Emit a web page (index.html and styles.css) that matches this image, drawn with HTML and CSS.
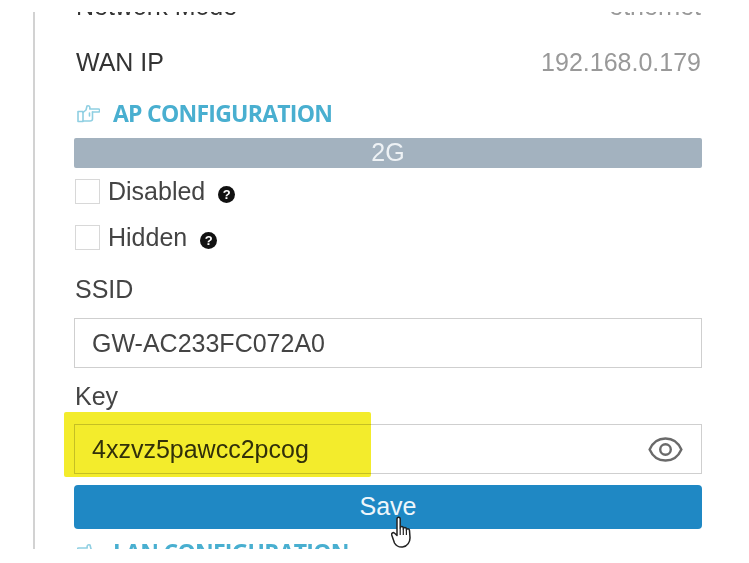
FILE: index.html
```html
<!DOCTYPE html>
<html lang="en">
  <head>
    <meta charset="UTF-8" />
    <meta name="viewport" content="width=device-width, initial-scale=1.0" />
    <title>AP Configuration</title>
    <link rel="stylesheet" href="styles.css">
  </head>
  <body>
    <div class="panel">
      <div class="content">
        <div class="row"><span>Network Mode</span><span class="value">ethernet</span></div>
        <div class="row"><span>WAN IP</span><span class="value">192.168.0.179</span></div>

        <h3 class="section">
          <svg class="hand" viewBox="0 0 23 19" fill="none" stroke="currentColor" stroke-width="1.6" stroke-linejoin="round" stroke-linecap="round">
            <path d="M1 7.500h5v10H1z" />
            <path d="M6 8.500 9 6l1-4c2-.8 3.300.5 2.800 3H21.500c1.500 0 1.500 3 0 3H15.500" />
            <path d="M15.500 8v7c0 1.500-1 2-2.500 2H6" />
            <path d="M12.500 9v3" />
          </svg>
          AP CONFIGURATION
        </h3>

        <div class="band">2G</div>

        <label class="check first"><span class="box"></span>Disabled<span class="help">?</span></label>
        <label class="check"><span class="box"></span>Hidden<span class="help">?</span></label>

        <div class="label ssid-label">SSID</div>
        <div class="field">GW-AC233FC072A0</div>

        <div class="label key-label">Key</div>
        <div class="field key-field">
          4xzvz5pawcc2pcog
          <svg class="eye" viewBox="0 0 36 26" fill="none" stroke="#6a6a6a" stroke-width="2.500">
            <path d="M1.500 13C5 5 11 1.500 18 1.500S31 5 34.500 13C31 21 25 24.500 18 24.500S5 21 1.500 13z" />
            <circle cx="18" cy="13" r="5.500" />
          </svg>
          <span class="marker"></span>
        </div>

        <div class="save">
          Save
          <svg class="cursor" viewBox="0 0 24 32">
            <path d="M6 3c0-2.500 3.200-2.500 3.200 0v9c.2-2 3-2 3.100 0v1c.2-2 3-2 3.100 0v1c.2-1.800 3-1.600 3.100.5l.5 7c.2 4-2.500 9-7.500 9.500-4 .3-6.300-1-8-4L.9 19.500c-1-2 1-3.500 2.500-2.500L6 19.500z" fill="#fff" stroke="#222" stroke-width="1.500" stroke-linejoin="round" />
            <path d="M9.200 12v7M12.300 13v6M15.400 14v5" fill="none" stroke="#222" stroke-width="1.200" />
          </svg>
        </div>

        <h3 class="section lan">
          <svg class="hand flip" viewBox="0 0 23 19" fill="none" stroke="currentColor" stroke-width="1.600" stroke-linejoin="round" stroke-linecap="round">
            <path d="M1 7.500h5v10H1z" />
            <path d="M6 8.500 9 6l1-4c2-.8 3.300.5 2.800 3H21.500c1.500 0 1.500 3 0 3H15.500" />
          </svg>
          LAN CONFIGURATION
        </h3>
      </div>
    </div>
  </body>
</html>
```

FILE: styles.css
```css
body {
  margin: 0;
  padding: 12px 0 0 33px;
  background-color: #fff;
  font-family: "Liberation Sans", Arial, sans-serif;
  font-size: 25px;
  color: #444;
  overflow: hidden;
}

.panel {
  width: 669px;
  height: 537px;
  box-sizing: border-box;
  padding-left: 39px;
  border-left: 2px solid #d2d2d2;
  overflow: hidden;
}

/* scrolled view, first row is cut by the top of the panel */
.content {
  margin-top: -31px;
}

.row {
  display: flex;
  justify-content: space-between;
  height: 50px;
  line-height: 50px;
  padding: 0 1px 0 2px;
  color: #333;
}

.row:first-child {
  height: 56px;
}

.value {
  color: #999;
}

.section {
  display: flex;
  align-items: center;
  gap: 13px;
  height: 40px;
  margin: 6px 0 5px;
  padding-left: 3px;
  font-family: "Open Sans", sans-serif;
  font-size: 23px;
  font-weight: 700;
  color: #49afd0;
  letter-spacing: -0.75px;
}

.hand {
  width: 23px;
  height: 19px;
  color: #8fcfe2;
}

.band {
  height: 30px;
  line-height: 28px;
  text-align: center;
  color: #eef2f5;
  background-color: #a3b2bf;
  border-radius: 2px;
}

.check {
  display: flex;
  align-items: center;
  height: 25px;
  margin-top: 21px;
  padding-left: 1px;
}

.check.first {
  margin-top: 11px;
}

.box {
  width: 25px;
  height: 25px;
  box-sizing: border-box;
  margin-right: 8px;
  border: 1px solid #d8d8d8;
}

.help {
  display: inline-block;
  width: 17px;
  height: 17px;
  margin: 6px 0 0 13px;
  border-radius: 50%;
  background-color: #111;
  color: #fff;
  font-size: 13px;
  font-weight: bold;
  line-height: 17px;
  text-align: center;
}

.label {
  padding-left: 1px;
  line-height: 30px;
}

.ssid-label {
  margin-top: 24px;
}

.key-label {
  margin-top: 13px;
}

.field {
  position: relative;
  height: 50px;
  box-sizing: border-box;
  margin-top: 14px;
  padding-left: 17px;
  line-height: 48px;
  border: 1px solid #cfcfcf;
}

.key-field {
  margin-top: 13px;
  color: #333;
}

.eye {
  position: absolute;
  top: 12px;
  right: 18px;
  width: 35px;
  height: 25px;
}

/* yellow marker drawn over the video frame */
.marker {
  position: absolute;
  left: -11px;
  top: -13px;
  width: 307px;
  height: 65px;
  border-radius: 2px;
  background-color: #f3ec2c;
  mix-blend-mode: multiply;
}

.save {
  position: relative;
  height: 44px;
  margin-top: 11px;
  line-height: 42px;
  text-align: center;
  color: #eef6fb;
  background-color: #1f88c4;
  border-radius: 4px;
}

.cursor {
  position: absolute;
  left: 317px;
  top: 31px;
  width: 24px;
  height: 32px;
}

.lan {
  margin-top: 3px;
}

.flip {
  transform: scaleX(-1);
}
```
